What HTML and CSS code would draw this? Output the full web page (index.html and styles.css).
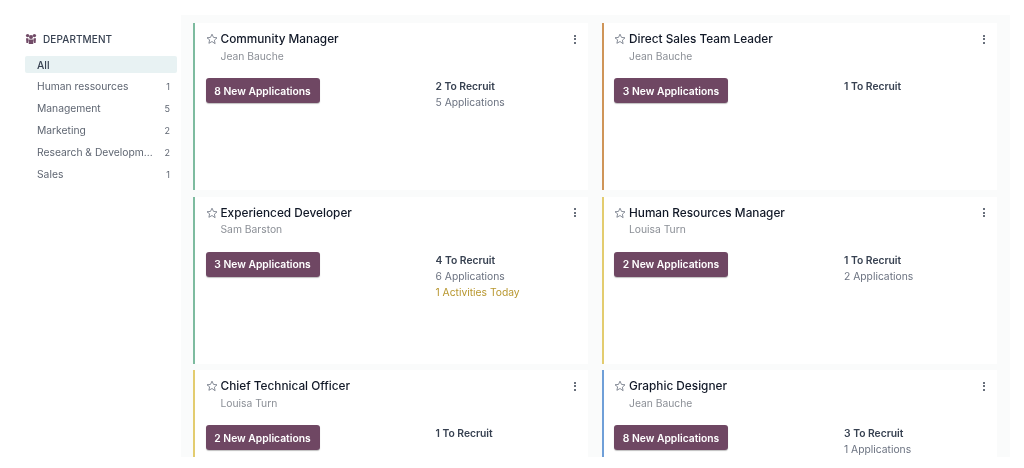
FILE: index.html
```html
<!DOCTYPE html>
<html lang="en">
<head>
<meta charset="utf-8">
<title>Job Positions</title>
<link rel="stylesheet" href="styles.css">
</head>
<body>
<div class="app">
  <aside class="side">
    <div class="side-head">
      <svg class="dept-icon" viewBox="0 0 12 12" width="12" height="12"><circle cx="2.6" cy="2.6" r="1.7"/><circle cx="9.4" cy="2.6" r="1.7"/><circle cx="6" cy="4" r="2"/><path d="M1 5.2h2.4L3 10H1.400zM8.600 5.200H11L10.600 10H9zM3.400 6.500h5.200L8.200 11H3.800z"/></svg>
      <span>DEPARTMENT</span>
    </div>
    <ul class="dept-list">
      <li class="dept active"><span>All</span></li>
      <li class="dept"><span>Human ressources</span><span class="n">1</span></li>
      <li class="dept"><span>Management</span><span class="n">5</span></li>
      <li class="dept"><span>Marketing</span><span class="n">2</span></li>
      <li class="dept"><span class="trunc">Research &amp; Developm...</span><span class="n">2</span></li>
      <li class="dept"><span>Sales</span><span class="n">1</span></li>
    </ul>
  </aside>
  <main class="main">
    <div class="grid">
      <article class="card c-green">
        <div class="top">
          <svg class="star" viewBox="0 0 12 12" width="12" height="12"><path d="M6 1.200l1.500 3.200 3.500.4-2.600 2.400.7 3.500L6 8.500l-3.100 1.800.7-3.500L1 4.800l3.500-.4z"/></svg>
          <div class="title">Community Manager</div>
          <div class="kebab"><i></i><i></i><i></i></div>
        </div>
        <div class="person">Jean Bauche</div>
        <div class="body">
          <button class="btn">8 New Applications</button>
          <div class="stats"><div class="rec">2 To Recruit</div><div class="apps">5 Applications</div></div>
        </div>
      </article>
      <article class="card c-orange">
        <div class="top">
          <svg class="star" viewBox="0 0 12 12" width="12" height="12"><path d="M6 1.200l1.500 3.200 3.500.4-2.600 2.400.7 3.500L6 8.500l-3.100 1.800.7-3.500L1 4.800l3.500-.4z"/></svg>
          <div class="title">Direct Sales Team Leader</div>
          <div class="kebab"><i></i><i></i><i></i></div>
        </div>
        <div class="person">Jean Bauche</div>
        <div class="body">
          <button class="btn">3 New Applications</button>
          <div class="stats"><div class="rec">1 To Recruit</div></div>
        </div>
      </article>
      <article class="card c-green">
        <div class="top">
          <svg class="star" viewBox="0 0 12 12" width="12" height="12"><path d="M6 1.200l1.500 3.200 3.500.4-2.600 2.400.7 3.500L6 8.500l-3.100 1.800.7-3.500L1 4.800l3.500-.4z"/></svg>
          <div class="title">Experienced Developer</div>
          <div class="kebab"><i></i><i></i><i></i></div>
        </div>
        <div class="person">Sam Barston</div>
        <div class="body">
          <button class="btn">3 New Applications</button>
          <div class="stats"><div class="rec">4 To Recruit</div><div class="apps">6 Applications</div><div class="today">1 Activities Today</div></div>
        </div>
      </article>
      <article class="card c-yellow">
        <div class="top">
          <svg class="star" viewBox="0 0 12 12" width="12" height="12"><path d="M6 1.200l1.500 3.200 3.500.4-2.600 2.400.7 3.500L6 8.500l-3.100 1.800.7-3.500L1 4.800l3.500-.4z"/></svg>
          <div class="title">Human Resources Manager</div>
          <div class="kebab"><i></i><i></i><i></i></div>
        </div>
        <div class="person">Louisa Turn</div>
        <div class="body">
          <button class="btn">2 New Applications</button>
          <div class="stats"><div class="rec">1 To Recruit</div><div class="apps">2 Applications</div></div>
        </div>
      </article>
      <article class="card c-yellow">
        <div class="top">
          <svg class="star" viewBox="0 0 12 12" width="12" height="12"><path d="M6 1.200l1.500 3.200 3.500.4-2.600 2.400.7 3.500L6 8.500l-3.100 1.800.7-3.500L1 4.800l3.500-.4z"/></svg>
          <div class="title">Chief Technical Officer</div>
          <div class="kebab"><i></i><i></i><i></i></div>
        </div>
        <div class="person">Louisa Turn</div>
        <div class="body">
          <button class="btn">2 New Applications</button>
          <div class="stats"><div class="rec">1 To Recruit</div></div>
        </div>
      </article>
      <article class="card c-blue">
        <div class="top">
          <svg class="star" viewBox="0 0 12 12" width="12" height="12"><path d="M6 1.200l1.500 3.200 3.500.4-2.600 2.400.7 3.500L6 8.500l-3.100 1.800.7-3.500L1 4.800l3.500-.4z"/></svg>
          <div class="title">Graphic Designer</div>
          <div class="kebab"><i></i><i></i><i></i></div>
        </div>
        <div class="person">Jean Bauche</div>
        <div class="body">
          <button class="btn">8 New Applications</button>
          <div class="stats"><div class="rec">3 To Recruit</div><div class="apps">1 Applications</div></div>
        </div>
      </article>
    </div>
  </main>
</div>
</body>
</html>
```

FILE: styles.css
```css
* { box-sizing: border-box; }
html, body { margin: 0; padding: 0; background: #fff; }
body { font-family: Inter, "Liberation Sans", sans-serif; color: #374151; overflow: hidden; }
.app { display: flex; width: 1024px; height: 468px; align-items: flex-start; filter: blur(.45px); }

.side { width: 181px; flex: none; padding: 32px 4px 0 25px; }
.side-head { display: flex; align-items: center; gap: 6px; height: 14px; font-size: 10px; font-weight: 500; letter-spacing: .1px; color: #374151; }
.dept-icon { fill: #714b67; flex: none; }
.dept-list { list-style: none; margin: 10px 0 0; padding: 0; }
.dept { display: flex; justify-content: space-between; align-items: center; height: 22px; padding: 0 7px 0 12px; font-size: 10.300px; color: #5f6672; }
.dept.active { height: 17px; margin-bottom: 2px; background: #e8f2f3; border-radius: 2px; color: #374151; font-weight: 500; }
.trunc { white-space: nowrap; }
.n { font-size: 9px; }

.main { flex: none; width: 829px; height: 442px; margin-top: 15px; padding: 8px 13px 0 12px; background: #fafbfb; overflow: hidden; }
.grid { display: grid; grid-template-columns: 395px 395px; grid-auto-rows: 167px; column-gap: 13.500px; row-gap: 6.500px; }
.card { background: #fff; border-left: 2.500px solid #ccc; padding: 9px 12px 0 10.500px; }
.c-green { border-left-color: #7dbb9f; }
.c-orange { border-left-color: #cf9558; }
.c-yellow { border-left-color: #e3cc6f; }
.c-blue { border-left-color: #6f9fd8; }
.top { display: flex; align-items: center; height: 14px; }
.star { flex: none; fill: none; stroke: #6b7280; stroke-width: .8; margin-right: 3px; }
.title { flex: 1; font-size: 11.800px; font-weight: 500; color: #111827; white-space: nowrap; }
.kebab { display: flex; flex-direction: column; gap: 1.500px; }
.kebab i { display: block; width: 2px; height: 2px; background: #374151; border-radius: 50%; }
.person { margin: 3.500px 0 0 15px; height: 13px; line-height: 13px; font-size: 10.300px; color: #8b8f96; }
.body { display: flex; margin-top: 15.500px; }
.btn { flex: none; width: 114px; height: 25px; padding: 0; border: 0; border-radius: 3px; background: #6f4763; color: #fff; font: 600 10.300px Inter, "Liberation Sans", sans-serif; box-shadow: 0 1px 1px rgba(0,0,0,.25); }
.stats { margin: 0 0 0 116px; font-size: 10.300px; line-height: 16px; color: #6b7280; }
.rec { font-weight: 600; color: #374151; }
.today { color: #b8972f; }
```
